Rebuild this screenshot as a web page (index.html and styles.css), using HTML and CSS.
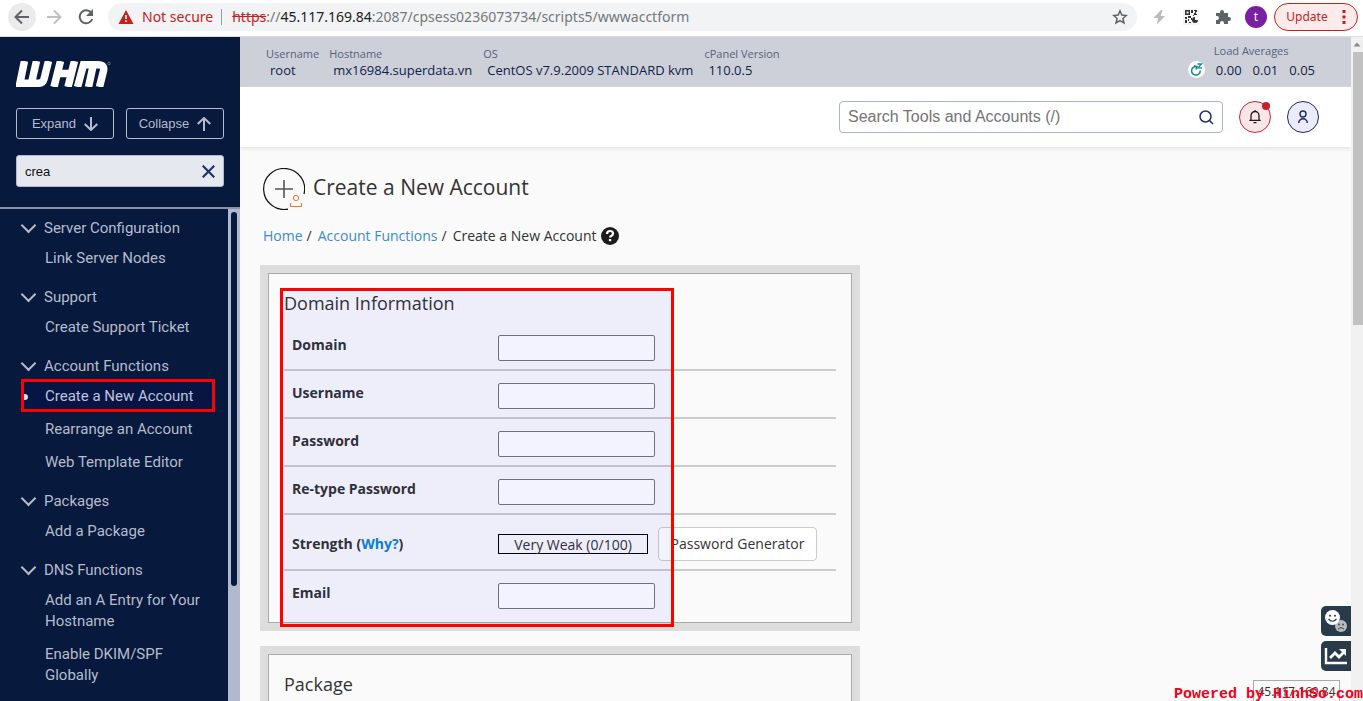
FILE: index.html
```html
<!DOCTYPE html>
<html lang="en">
<head>
<meta charset="utf-8">
<title>WHM - Create a New Account</title>
<link rel="stylesheet" href="styles.css">
</head>
<body>
<header class="browser">
  <button class="nav-btn nav-back" aria-label="Back"><svg width="16" height="16" viewBox="0 0 16 16"><path d="M15 8H2M8 1.500L1.500 8L8 14.500" fill="none" stroke="#5f6368" stroke-width="2"/></svg></button>
  <button class="nav-btn" aria-label="Forward"><svg width="16" height="16" viewBox="0 0 16 16"><path d="M1 8h13M8 1.500L14.500 8L8 14.500" fill="none" stroke="#bdc1c6" stroke-width="2"/></svg></button>
  <button class="nav-btn" aria-label="Reload"><svg width="16" height="16" viewBox="0 0 16 16"><path d="M13.500 4A6.500 6.500 0 1 0 14.300 10" fill="none" stroke="#5f6368" stroke-width="2"/><path d="M15 0v7H8z" fill="#5f6368"/></svg></button>
  <div class="address">
    <svg width="16" height="14" viewBox="0 0 16 14"><path d="M8 0l7.500 14H.5z" fill="#c5221f"/><path d="M7.200 5h1.600v4H7.200zM7.200 10.300h1.600v1.700H7.200z" fill="#fff"/></svg>
    <span class="insecure">Not secure</span>
    <span class="url"><s>https</s>://<b>45.117.169.84</b>:2087/cpsess0236073734/scripts5/wwwacctform</span>
    <button class="icon-btn" aria-label="Bookmark"><svg width="16" height="16" viewBox="0 0 16 16"><path d="M8 1.800l1.800 4.300 4.600.4-3.500 3 1.100 4.500L8 11.600 4 14l1.100-4.500-3.500-3 4.600-.4z" fill="none" stroke="#5f6368" stroke-width="1.500"/></svg></button>
  </div>
  <div class="extensions">
    <svg width="16" height="18" viewBox="0 0 16 18"><path d="M10 2L2.500 10h4.500l-1 6.500 8-8.500H9.500l2-6z" fill="#b9bbbe"/></svg>
    <svg width="16" height="16" viewBox="0 0 16 16"><path d="M0 0h16v16H0z" fill="#f4f4f4"/><path d="M2 1h5v5H2zM3.500 2.500v2h2v-2zM8 1h2v3H8zM11 1h3v2h-1v2h1v1h-3V4h1V2h-1zM2 8h2v2H2zM5 7h3v2H5zM2 11h2v3H2zM5 10h1v2H5zM6 13h2v1H6zM8 9h1v2H8zM12 8v3h3a3 3 0 1 1-3-3zM10 6h1v1h-1z" fill="#333" fill-rule="evenodd"/></svg>
    <svg width="16" height="16" viewBox="0 0 16 16"><path d="M1 4h4V3a2 2 0 0 1 4 0v1h4v4h1a2 2 0 0 1 0 4h-1v3H9v-1a2 2 0 0 0-4 0v1H1v-4h1a2 2 0 0 0 0-4H1z" fill="#5f6368"/></svg>
    <span class="avatar">t</span>
  </div>
  <button class="update">Update <svg width="4" height="14" viewBox="0 0 4 14"><path d="M.5 0h3v3h-3zM.5 5.500h3v3h-3zM.5 11h3v3h-3z" fill="#c5221f"/></svg></button>
</header>
<div class="app">
  <aside class="sidebar">
    <div class="side-top">
      <svg class="logo" width="95" height="26" viewBox="0 0 95 26" role="img" aria-label="WHM"><g fill="none" stroke="#fff" stroke-width="7.500"><path d="M8.500 0L3.900 22.200H23q4 0 5-4L32.500 0M20.500 0L15.500 22"/><path d="M44.500 0L38 26M41 12.500H55M58.500 0L52 26"/><path d="M61.500 26L67.500 3.800H82q7 0 5.500 6L83.500 26M77.500 3L72.500 26"/></g><circle cx="93" cy="2.500" r="1.300" fill="none" stroke="#8d98ae" stroke-width=".6"/></svg>
      <div class="side-buttons">
        <button>Expand <svg width="14" height="14" viewBox="0 0 14 14"><path d="M7 0v13M.7 7L7 13 13.300 7" fill="none" stroke="currentColor" stroke-width="2"/></svg></button>
        <button>Collapse <svg width="14" height="14" viewBox="0 0 14 14"><path d="M7 14V1M.7 7L7 1 13.300 7" fill="none" stroke="currentColor" stroke-width="2"/></svg></button>
      </div>
      <div class="filter">
        <input type="text" value="crea" aria-label="Filter tools">
        <button class="icon-btn" aria-label="Clear"><svg width="13" height="13" viewBox="0 0 13 13"><path d="M.7.7l11.600 11.600M12.300.7L.7 12.300" fill="none" stroke="#1e3377" stroke-width="2.200"/></svg></button>
      </div>
    </div>
    <div class="side-body">
      <nav class="menu">
        <section><h2>Server Configuration</h2><a href="#">Link Server Nodes</a></section>
        <section><h2>Support</h2><a href="#">Create Support Ticket</a></section>
        <section><h2>Account Functions</h2><a href="#" class="current">Create a New Account</a><a href="#">Rearrange an Account</a><a href="#">Web Template Editor</a></section>
        <section><h2>Packages</h2><a href="#">Add a Package</a></section>
        <section><h2>DNS Functions</h2><a href="#">Add an A Entry for Your Hostname</a><a href="#">Enable DKIM/SPF Globally</a></section>
      </nav>
      <div class="side-scroll"><div class="side-thumb"></div></div>
    </div>
  </aside>
  <div class="content">
    <div class="stats">
      <dl>
        <div><dt>Username</dt><dd>root</dd></div>
        <div><dt>Hostname</dt><dd>mx16984.superdata.vn</dd></div>
        <div><dt>OS</dt><dd>CentOS v7.9.2009 STANDARD kvm</dd></div>
        <div><dt>cPanel Version</dt><dd>110.0.5</dd></div>
      </dl>
      <div class="load">
        <svg width="17" height="17" viewBox="0 0 17 17"><circle cx="8.500" cy="8.500" r="8.500" fill="#fff"/><path d="M8.500 5.500A4.300 4.300 0 1 0 12.200 9.500M8 8.500l1-3-3-.8" fill="none" stroke="#158a9c" stroke-width="1.500"/><path d="M9.500 3h4L10 6.800h4" fill="none" stroke="#158a9c" stroke-width="1.300"/></svg>
        <div><span class="load-title">Load Averages</span><div class="load-values"><span>0.00</span><span>0.01</span><span>0.05</span></div></div>
      </div>
    </div>
    <div class="toolbar">
      <div class="search">
        <input type="text" placeholder="Search Tools and Accounts (/)" aria-label="Search Tools and Accounts">
        <button class="icon-btn" aria-label="Search"><svg width="15" height="15" viewBox="0 0 15 15"><circle cx="6.500" cy="6.500" r="5.500" fill="none" stroke="#1e3370" stroke-width="1.500"/><path d="M10.500 10.500l3.500 3.500" stroke="#1e3370" stroke-width="1.600"/></svg></button>
      </div>
      <button class="round alert" aria-label="Notifications"><svg width="12" height="14" viewBox="0 0 12 14"><path d="M.3 10.300H11.700M2 10V5.500a4 4 0 0 1 8 0V10M4.500 12.700h3M6 0v1.500" fill="none" stroke="#1d1d1d" stroke-width="1.300"/></svg><span class="dot"></span></button>
      <button class="round user" aria-label="User"><svg width="12" height="14" viewBox="0 0 12 14"><circle cx="6" cy="4" r="3" fill="none" stroke="#1e2b5c" stroke-width="1.400"/><path d="M1.700 13a4.300 4.300 0 0 1 8.600 0" fill="none" stroke="#1e2b5c" stroke-width="1.400"/></svg></button>
    </div>
    <main class="page">
      <div class="title">
        <svg width="42" height="42" viewBox="0 0 42 42"><path d="M25 41.100A20.500 20.500 0 1 1 41 26" fill="none" stroke="#111" stroke-width="1.200"/><path d="M21 12v18M12 21h18" stroke="#555" stroke-width="1.600"/><circle cx="33" cy="30" r="2.600" fill="none" stroke="#ff6c2c"/><path d="M27.500 35v3.500h11V35" fill="none" stroke="#ff6c2c"/></svg>
        <h1>Create a New Account</h1>
      </div>
      <nav class="crumbs"><a href="#">Home</a><i>/</i><a href="#">Account Functions</a><i>/</i><span>Create a New Account</span><svg width="18" height="18" viewBox="0 0 18 18"><circle cx="9" cy="9" r="9" fill="#1d1d1d"/><path d="M6 7q0-3 3-3t3 2.500q0 1.500-1.500 2.200T9 10.500" fill="none" stroke="#fff" stroke-width="2.200"/><path d="M7.900 12h2.300v2.200H7.900z" fill="#fff"/></svg></nav>
      <form class="frame">
        <div class="panel">
          <h2>Domain Information</h2>
          <div class="row"><label for="domain">Domain</label><input id="domain" type="text"></div>
          <div class="row"><label for="user">Username</label><input id="user" type="text"></div>
          <div class="row"><label for="pass">Password</label><input id="pass" type="password"></div>
          <div class="row"><label for="pass2">Re-type Password</label><input id="pass2" type="password"></div>
          <div class="row strength"><span class="label">Strength (<a href="#">Why?</a>)</span><span class="meter">Very Weak (0/100)</span><button type="button">Password Generator</button></div>
          <div class="row"><label for="email">Email</label><input id="email" type="email"></div>
        </div>
        <div class="marker"></div>
      </form>
      <section class="frame package"><div class="panel"><h2>Package</h2></div></section>
    </main>
    <div class="floating">
      <button aria-label="Feedback"><svg width="30" height="30" viewBox="0 0 30 30"><circle cx="20" cy="20" r="6" fill="#b9babb"/><circle cx="18" cy="18.500" r=".9" fill="#444"/><circle cx="22" cy="18.500" r=".9" fill="#444"/><path d="M17 23q3-3 6 0" fill="none" stroke="#444"/><circle cx="11.500" cy="11.500" r="7.500" fill="#fff"/><circle cx="9" cy="9.700" r="1" fill="#293a4a"/><circle cx="14" cy="9.700" r="1" fill="#293a4a"/><path d="M7.500 13q4 4.500 8 0" fill="none" stroke="#293a4a" stroke-width="1.200"/></svg></button>
      <button aria-label="Analytics"><svg width="30" height="30" viewBox="0 0 30 30"><path d="M5 7v15h21" fill="none" stroke="#fff" stroke-width="2.400"/><path d="M9 17l5-5 4 4 6-6" fill="none" stroke="#fff" stroke-width="2.800"/><path d="M18 8h7v7z" fill="#fff"/></svg></button>
    </div>
  </div>
  <div class="scrollbar"><svg width="12" height="14" viewBox="0 0 12 14"><path d="M2.500 9.500h7L6 5.500z" fill="#888"/></svg><div class="thumb"></div></div>
  <div class="ip">45.117.169.84</div>
  <div class="watermark">Powered by HinhSo.com</div>
</div>
</body>
</html>
```
FILE: styles.css
```css
* { box-sizing: border-box; }
body { margin: 0; height: 100vh; display: flex; flex-direction: column; overflow: hidden; font: 14px/20px "Open Sans", sans-serif; color: #333; background: #fafafa; }
button { font: inherit; color: inherit; padding: 0; border: 0; background: none; display: flex; align-items: center; justify-content: center; }
h1, h2, dl, dd { margin: 0; font-weight: 400; }
a { text-decoration: none; }
svg { display: block; flex: none; }

.browser { flex: none; height: 37px; padding: 0 5px 3px 8px; display: flex; align-items: center; gap: 4px; background: #fff; border-bottom: 1px solid #dcdfe2; font-family: "Noto Sans", sans-serif; }
.nav-btn { width: 28px; height: 28px; border-radius: 50%; }
.nav-back { background: #ebebec; }
.address { flex: 1; height: 28px; margin-left: 4px; padding: 0 9px 0 10px; display: flex; align-items: center; border-radius: 14px; background: #f1f3f4; color: #74787c; }
.insecure { margin-left: 8px; padding-right: 8px; border-right: 1px solid #9a9da0; line-height: 16px; color: #c5221f; }
.url { flex: 1; margin-left: 10px; }
.url s { color: #c5221f; }
.url b { font-weight: 400; color: #202124; }
.extensions { display: flex; align-items: center; gap: 16px; margin: 0 3px 0 10px; }
.avatar { width: 22px; height: 22px; margin-left: -2px; border-radius: 50%; background: #7b1fa2; color: #fff; text-align: center; font-size: 12px; line-height: 21px; }
.update { width: 84px; height: 28px; gap: 14px; border: 1px solid #c5221f; border-radius: 14px; background: #fcebea; color: #c5221f; font-size: 12px; }

.app { position: relative; flex: 1; min-height: 0; display: flex; overflow: hidden; }
.sidebar { width: 240px; flex: none; display: flex; flex-direction: column; background: #07193c; color: #b5bccd; }
.side-top { padding: 24px 16px 20px; border-bottom: 2px solid #8b94ab; }
.side-buttons { display: flex; gap: 12px; margin: 21px 0 16px; }
.side-buttons button { flex: 1; height: 31px; gap: 8px; border: 1px solid #b5bccd; border-radius: 3px; font: 13px "Liberation Sans", sans-serif; }
.filter { display: flex; height: 32px; padding: 0 8px; border: 1px solid #b1b9ce; border-radius: 3px; background: #e6e8ef; }
.filter input { flex: 1; min-width: 0; padding: 0; border: 0; background: none; color: #111; font: 13px "Liberation Sans", sans-serif; }
.side-body { flex: 1; min-height: 0; display: flex; }
.menu { flex: 1; padding: 5px 12px 0 21px; overflow: hidden; font: 15px/21px Roboto, sans-serif; }
.menu section { margin-bottom: 14px; }
.menu h2 { position: relative; padding: 4px 0 9px 23px; font-size: 15px; line-height: 21px; }
.menu h2::before { content: ""; position: absolute; left: 2px; top: 6px; width: 9px; height: 9px; border: solid #b5bccd; border-width: 0 2px 2px 0; transform: rotate(45deg); }
.menu a { display: block; padding: 0 0 0 24px; margin-bottom: 12px; color: inherit; }
.menu .current { position: relative; color: #dadde5; }
.menu .current::before { content: ""; position: absolute; inset: -7px 1px -5px 0; border: 3px solid #f00; background: rgba(0, 0, 120, .12); }
.menu .current::after { content: ""; position: absolute; left: 3px; top: 8px; width: 4px; height: 6px; border-radius: 0 3px 3px 0; background: #dadde5; }
.side-scroll { width: 12px; padding: 3px; background: #b1b9ce; }
.side-thumb { width: 6px; height: 77%; border-radius: 3px; background: #07193c; }

.content { position: relative; flex: 1; min-width: 0; overflow: hidden; display: flex; flex-direction: column; }
.stats { flex: none; height: 50px; display: flex; justify-content: space-between; padding: 8px 36px 0 26px; background: #cdd0d8; color: #11224a; font-size: 13px; line-height: 16px; }
.stats dl { display: flex; gap: 10px; }
.stats dl div:nth-child(n+3) { margin-left: 1px; }
.stats dt, .load-title { font-size: 11px; line-height: 17px; color: #56617f; }
.stats dd { padding-left: 4px; }
.load { display: flex; align-items: flex-end; gap: 9px; height: 36px; margin-top: -3px; }
.load-title { display: block; }
.load-values { display: flex; gap: 11px; padding: 3px 0 0 2px; }
.toolbar { flex: none; height: 60px; display: flex; align-items: center; justify-content: flex-end; gap: 16px; padding-right: 32px; background: #fff; box-shadow: 0 1px 4px #ddd; }
.search { width: 384px; height: 32px; display: flex; padding: 0 8px; border: 1px solid #abb3cb; border-radius: 4px; }
.search input { flex: 1; border: 0; padding: 0; font: 16px "Liberation Sans", sans-serif; }
.search input::placeholder { color: #757575; }
.round { position: relative; width: 32px; height: 32px; border: 1px solid; border-radius: 50%; }
.alert { border-color: #c6283a; background: #fbe5e7; }
.user { border-color: #1e2b5c; background: #eaebfd; }
.dot { position: absolute; right: 0; top: 0; width: 8px; height: 8px; border-radius: 50%; background: #c6202f; }
.page { padding: 21px 20px 0; }
.title { display: flex; gap: 8px; padding-left: 3px; }
.title h1 { font-size: 21px; line-height: 38px; }
.crumbs { display: flex; align-items: center; padding: 16px 0 19px 3px; }
.crumbs a { color: #428bca; }
.crumbs i { margin: 0 6px 0 4px; font-style: normal; }
.crumbs svg { margin-left: 5px; }
.frame { position: relative; width: 600px; max-width: 100%; margin-bottom: 15px; padding: 8px; background: #ddd; }
.panel { padding: 18px 15px 3px; border: 1px solid #aaa; background: #fafafa; }
.panel h2 { font-size: 18px; line-height: 22px; margin-bottom: 9px; }
.row { display: flex; height: 48px; padding: 12px 8px 0; border-bottom: 2px solid #ccc; }
.row:last-child { border: 0; }
.row label, .label { width: 206px; font-weight: 700; }
.label a { color: #0a84d6; }
.row input { width: 157px; height: 26px; border: 1px solid #767676; border-radius: 2px; background: #fff; }
.strength { height: 56px; }
.strength .label { line-height: 34px; }
.meter { width: 150px; height: 20px; margin: 7px 10px 0 0; border: 1px solid #000; line-height: 20px; text-align: center; }
.strength button { width: 159px; height: 34px; border: 1px solid #ccc; border-radius: 4px; background: #fff; }
.marker { position: absolute; left: 20px; top: 23px; right: 186px; bottom: 4px; border: 3px solid #f00; background: rgba(0, 0, 255, .047); pointer-events: none; }
.package .panel { min-height: 200px; }
.floating { position: absolute; right: 0; bottom: 30px; display: grid; gap: 5px; }
.floating button { border-radius: 5px 0 0 5px; background: #293a4a; }
.scrollbar { flex: none; width: 12px; background: #f1f1f1; }
.thumb { height: 273px; margin: 1px 0 0 2px; background: #c1c1c1; }
.ip { position: absolute; right: 23px; bottom: -3px; width: 87px; height: 24px; border: 1px solid #aaa; background: #fafafa; text-align: center; font-size: 12px; line-height: 22px; }
.watermark { position: absolute; right: 0; bottom: -3px; color: #f0001c; font: bold 15px/18px "Liberation Mono", monospace; }
```
